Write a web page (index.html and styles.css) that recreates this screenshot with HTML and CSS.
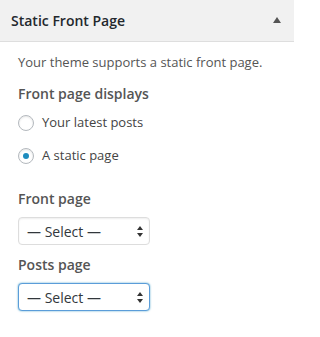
FILE: index.html
```html
<!DOCTYPE html>
<html>
<head>
<meta charset="utf-8">
<link rel="stylesheet" href="styles.css">
</head>
<body>
<div class="panel">
  <div class="section-title">
    <span>Static Front Page</span>
    <svg class="caret" width="8" height="6" viewBox="0 0 8 6"><path d="M4 0 L8 6 L0 6 Z" fill="#555"/></svg>
  </div>
  <div class="section-body">
    <p class="desc">Your theme supports a static front page.</p>
    <div class="control-title">Front page displays</div>
    <div class="radios">
      <label class="radio-row"><span class="radio"></span><span>Your latest posts</span></label>
      <label class="radio-row"><span class="radio checked"></span><span>A static page</span></label>
    </div>
    <div class="control-title first-select">Front page</div>
    <div class="select">
      <span>— Select —</span>
      <svg class="arrows" width="6" height="11" viewBox="0 0 6 11"><path d="M3 0 L6 4 L0 4 Z M3 11 L6 7 L0 7 Z" fill="#333"/></svg>
    </div>
    <div class="control-title second-select">Posts page</div>
    <div class="select focus">
      <span>— Select —</span>
      <svg class="arrows" width="6" height="11" viewBox="0 0 6 11"><path d="M3 0 L6 4 L0 4 Z M3 11 L6 7 L0 7 Z" fill="#333"/></svg>
    </div>
  </div>
</div>
</body>
</html>
```

FILE: styles.css
```css
html, body {
  margin: 0;
  padding: 0;
  background: #fff;
}
body {
  font-family: "Open Sans", "Liberation Sans", sans-serif;
  width: 295px;
  height: 337px;
  overflow: hidden;
}
.panel {
  width: 295px;
}
.section-title {
  width: 294px;
  box-sizing: border-box;
  height: 42px;
  padding: 10px 13px 11px 11px;
  background: #f1f1f1;
  border-bottom: 1px solid #dedede;
  display: flex;
  align-items: center;
  justify-content: space-between;
  font-size: 14px;
  line-height: 20px;
  font-weight: 600;
  color: #23282d;
}
.section-title span {
  margin-top: 1px;
}
.caret {
  display: block;
  margin-top: -1px;
}
.section-body {
  padding: 10px 18px 0 18px;
}
.desc {
  margin: 0;
  font-size: 13px;
  line-height: 20px;
  color: #555;
}
.control-title {
  margin-top: 10px;
  font-size: 14px;
  line-height: 24px;
  font-weight: 600;
  color: #555;
}
.radios {
  display: flex;
  flex-direction: column;
  gap: 13px;
  margin-top: 6px;
}
.radio-row {
  display: flex;
  align-items: center;
  gap: 8px;
  height: 20px;
  font-size: 13px;
  line-height: 20px;
  color: #444;
}
.radio {
  width: 16px;
  height: 16px;
  box-sizing: border-box;
  border: 1px solid #b4b9be;
  border-radius: 50%;
  box-shadow: inset 0 1px 2px rgba(0,0,0,0.1);
  background: #fff;
  display: flex;
  align-items: center;
  justify-content: center;
  margin-top: 2px;
}
.radio.checked::before {
  content: "";
  width: 6px;
  height: 6px;
  border-radius: 50%;
  background: #1e8cbe;
}
.first-select {
  margin-top: 22px;
}
.second-select {
  margin-top: 8px;
}
.select {
  margin-top: 6px;
  width: 132px;
  height: 28px;
  box-sizing: border-box;
  border: 1px solid #ddd;
  border-radius: 4px;
  box-shadow: inset 0 1px 2px rgba(0,0,0,0.07);
  background: #fff;
  display: flex;
  align-items: center;
  justify-content: space-between;
  padding: 0 6px 0 8px;
  font-size: 14px;
  color: #32373c;
}
.select.focus {
  border-color: #5b9dd9;
  box-shadow: 0 0 2px rgba(30,140,190,0.8);
}
.arrows {
  display: block;
}
```
